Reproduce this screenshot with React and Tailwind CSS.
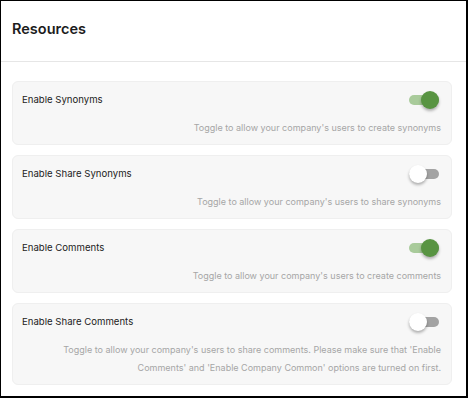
import React from "react";

function Toggle({ on }) {
  return (
    <div className="relative w-[30px] h-[20px] flex items-center shrink-0">
      <div
        className={
          "w-[30px] h-[10px] rounded-full " +
          (on ? "bg-[#a9cb9b]" : "bg-[#a3a3a3]")
        }
      />
      <div
        className={
          "absolute top-[1px] w-[18px] h-[18px] rounded-full shadow-[0_2px_3px_rgba(0,0,0,0.3)] " +
          (on ? "right-0 bg-[#589442]" : "left-0 bg-white")
        }
      />
    </div>
  );
}

function Card({ title, on, children }) {
  return (
    <div className="rounded-[6px] bg-[#f7f7f7] border border-[#efefef] pt-[8px] pb-[7px] pl-[9px] pr-[10px]">
      <div className="flex items-center justify-between h-[20px] pr-[2px]">
        <span className="text-[9.6px] text-[#222222]">{title}</span>
        <Toggle on={on} />
      </div>
      <div className="mt-[9px] text-right text-[9px] leading-[18px] text-[#a6a6a6]">
        {children}
      </div>
    </div>
  );
}

export default function App() {
  return (
    <div
      className="w-[468px] h-[398px] bg-white border-l border-t border-r-2 border-b-2 border-black overflow-hidden"
      style={{ fontFamily: "Inter, 'Noto Sans', sans-serif" }}
    >
      <div className="h-[61px] flex items-center pl-[11px] border-b border-[#e6e6e6]">
        <h1 className="text-[14.5px] font-semibold text-[#1c1c1c] -mt-[4px]">Resources</h1>
      </div>
      <div className="flex flex-col gap-[10px] pt-[19px] pl-[11px] pr-[14px]">
        <Card title="Enable Synonyms" on>
          Toggle to allow your company's users to create synonyms
        </Card>
        <Card title="Enable Share Synonyms" on={false}>
          Toggle to allow your company's users to share synonyms
        </Card>
        <Card title="Enable Comments" on>
          Toggle to allow your company's users to create comments
        </Card>
        <Card title="Enable Share Comments" on={false}>
          Toggle to allow your company's users to share comments. Please make sure that 'Enable
          <br />
          Comments' and 'Enable Company Common' options are turned on first.
        </Card>
      </div>
    </div>
  );
}
